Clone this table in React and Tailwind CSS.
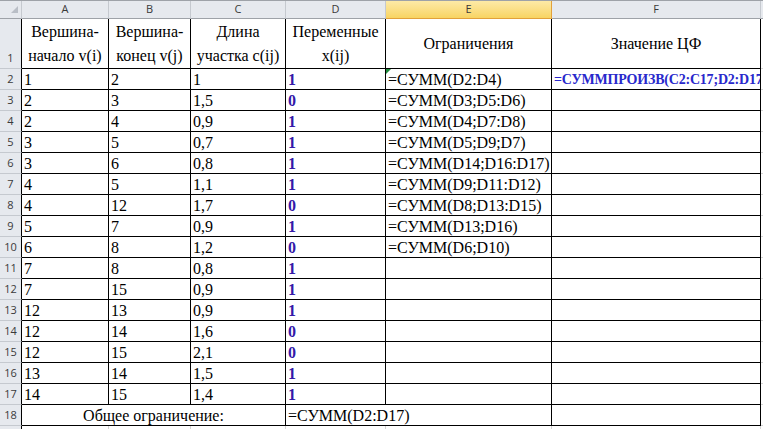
import React from "react";

const rows = [
  ["1", "2", "1", "1", "=СУММ(D2:D4)", "=СУММПРОИЗВ(C2:C17;D2:D17)"],
  ["2", "3", "1,5", "0", "=СУММ(D3;D5:D6)"],
  ["2", "4", "0,9", "1", "=СУММ(D4;D7:D8)"],
  ["3", "5", "0,7", "1", "=СУММ(D5;D9;D7)"],
  ["3", "6", "0,8", "1", "=СУММ(D14;D16:D17)"],
  ["4", "5", "1,1", "1", "=СУММ(D9;D11:D12)"],
  ["4", "12", "1,7", "0", "=СУММ(D8;D13:D15)"],
  ["5", "7", "0,9", "1", "=СУММ(D13;D16)"],
  ["6", "8", "1,2", "0", "=СУММ(D6;D10)"],
  ["7", "8", "0,8", "1"],
  ["7", "15", "0,9", "1"],
  ["12", "13", "0,9", "1"],
  ["12", "14", "1,6", "0"],
  ["12", "15", "2,1", "0"],
  ["13", "14", "1,5", "1"],
  ["14", "15", "1,4", "1"],
];

const serif = "font-['Liberation_Serif','Times_New_Roman',serif] text-[16px] text-black";
const hdrFont = "font-['Open_Sans','Noto_Sans',sans-serif] text-[11px] text-[#3a3a3a]";

function RowHead({ n, h, align = "items-center" }) {
  return (
    <div className={`w-[22px] shrink-0 ${h} bg-[#e6e9ee] border-r border-r-black border-b border-b-[#c5c9cf] flex ${align} justify-center ${hdrFont}`}>
      {n}
    </div>
  );
}

function Cell({ w, children, extra = "" }) {
  return (
    <div className={`${w} shrink-0 h-full border-r border-b border-black flex items-end px-[2px] overflow-hidden whitespace-nowrap ${extra}`}>
      <span className="leading-[18px]">{children}</span>
    </div>
  );
}

function GCell({ h }) {
  return <div className={`flex-1 ${h} bg-white border-b border-[#d4d4d4]`} />;
}

export default function App() {
  return (
    <div className={`w-[763px] h-[429px] overflow-hidden bg-white ${serif}`}>
      {/* Column headers */}
      <div className="flex h-[19px] border-t border-t-[#9ea2a8]">
        <div className="w-[22px] shrink-0 h-full bg-[#e6e9ee] border-r border-[#c5c9cf] border-b border-b-[#9ea2a8] relative">
          <svg className="absolute left-[11px] top-[5px]" width="7" height="7" viewBox="0 0 7 7">
            <polygon points="7,0 7,7 0,7" fill="#b9bec6" />
          </svg>
        </div>
        {[
          ["A", "w-[87px]"],
          ["B", "w-[82px]"],
          ["C", "w-[95px]"],
          ["D", "w-[100px]"],
        ].map(([l, w]) => (
          <div key={l} className={`${w} shrink-0 h-full bg-[#e6e9ee] border-r border-[#c5c9cf] border-b border-b-[#9ea2a8] flex items-center justify-center ${hdrFont}`}>
            {l}
          </div>
        ))}
        <div className={`w-[166px] shrink-0 h-full bg-gradient-to-b from-[#fdeaa6] to-[#f8d462] border-r border-[#e2a13b] border-b border-b-[#e2a13b] flex items-center justify-center ${hdrFont}`}>
          E
        </div>
        <div className={`w-[209px] shrink-0 h-full bg-[#e6e9ee] border-r border-[#c5c9cf] border-b border-b-[#9ea2a8] flex items-center justify-center ${hdrFont}`}>
          F
        </div>
        <div className="flex-1 h-full bg-[#e6e9ee] border-b border-b-[#9ea2a8]" />
      </div>

      {/* Row 1 */}
      <div className="flex h-[50px]">
        <RowHead n="1" h="h-full" align="items-end pb-[2px]" />
        {[
          ["w-[87px]", ["Вершина-", "начало v(i)"]],
          ["w-[82px]", ["Вершина-", "конец v(j)"]],
          ["w-[95px]", ["Длина", "участка c(ij)"]],
          ["w-[100px]", ["Переменные", "x(ij)"]],
          ["w-[166px]", ["Ограничения"]],
          ["w-[209px]", ["Значение ЦФ"]],
        ].map(([w, lines], i) => (
          <div key={i} className={`${w} shrink-0 h-full border-r border-b border-black flex flex-col items-center justify-center text-center leading-[24px] whitespace-nowrap`}>
            {lines.map((t) => (
              <span key={t}>{t}</span>
            ))}
          </div>
        ))}
        <GCell h="h-full" />
      </div>

      {/* Rows 2-17 */}
      {rows.map((r, i) => (
        <div key={i} className="flex h-[21px]">
          <RowHead n={String(i + 2)} h="h-full" />
          <Cell w="w-[87px]">{r[0]}</Cell>
          <Cell w="w-[82px]">{r[1]}</Cell>
          <Cell w="w-[95px]">{r[2]}</Cell>
          <Cell w="w-[100px]" extra="font-bold text-[#3418a8]">{r[3]}</Cell>
          <div className="w-[166px] shrink-0 h-full border-r border-b border-black flex items-end px-[2px] whitespace-nowrap relative">
            {i === 0 && (
              <svg className="absolute left-0 top-0" width="5" height="5" viewBox="0 0 5 5">
                <polygon points="0,0 5,0 0,5" fill="#1f8a3a" />
              </svg>
            )}
            <span className="leading-[18px]">{r[4] || ""}</span>
          </div>
          <Cell w="w-[209px]" extra="font-bold text-[#2828cc] text-[14px] tracking-[-0.2px]">{r[5] || ""}</Cell>
          <GCell h="h-full" />
        </div>
      ))}

      {/* Row 18 */}
      <div className="flex h-[21px]">
        <RowHead n="18" h="h-full" />
        <div className="w-[264px] shrink-0 h-full border-r border-b border-black flex items-end justify-center">
          <span className="leading-[18px]">Общее ограничение:</span>
        </div>
        <div className="w-[266px] shrink-0 h-full border-r border-b border-black flex items-end px-[2px] whitespace-nowrap">
          <span className="leading-[18px]">=СУММ(D2:D17)</span>
        </div>
        <div className="w-[209px] shrink-0 h-full border-r border-b border-black" />
        <GCell h="h-full" />
      </div>

      {/* Row 19 partial */}
      <div className="flex h-[20px]">
        <RowHead n="" h="h-full" />
        <div className="w-[87px] shrink-0 h-full border-r border-[#d4d4d4]" />
        <div className="w-[82px] shrink-0 h-full border-r border-[#d4d4d4]" />
        <div className="w-[95px] shrink-0 h-full border-r border-[#d4d4d4]" />
        <div className="w-[100px] shrink-0 h-full border-r border-[#d4d4d4]" />
        <div className="w-[166px] shrink-0 h-full border-r border-[#d4d4d4]" />
        <div className="w-[209px] shrink-0 h-full border-r border-[#d4d4d4]" />
        <div className="flex-1 h-full" />
      </div>
    </div>
  );
}
